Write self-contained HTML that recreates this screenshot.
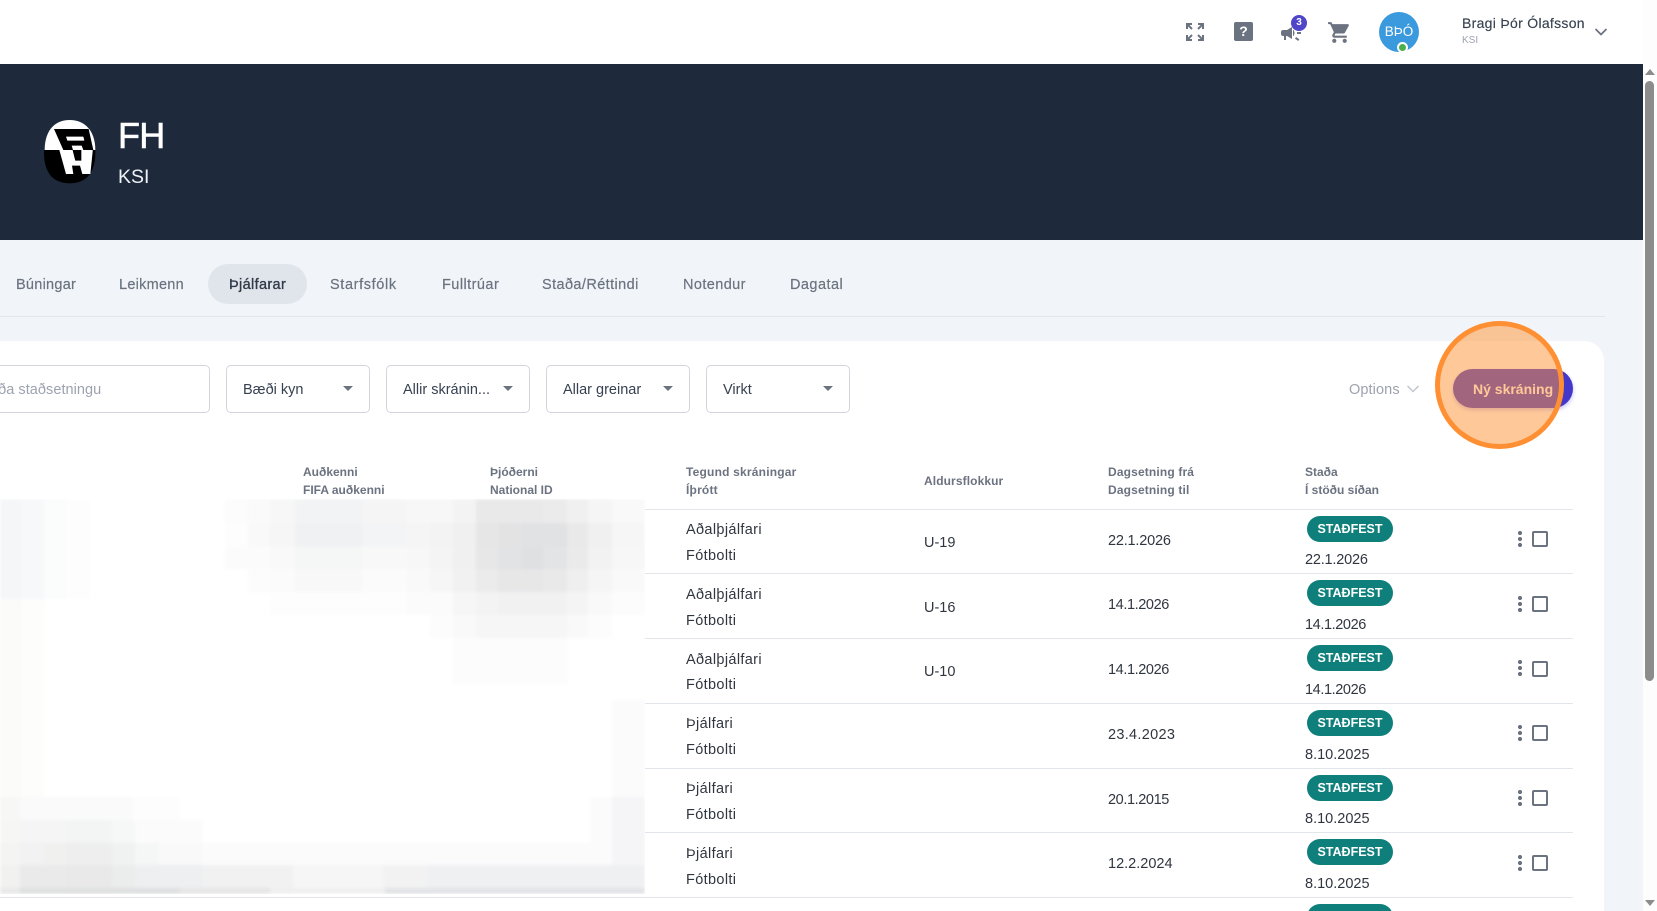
<!DOCTYPE html>
<html lang="is"><head><meta charset="utf-8"><title>FH</title>
<style>
*{box-sizing:border-box;margin:0;padding:0}
html,body{width:1657px;height:911px;overflow:hidden;background:#fff}
body{position:relative;font-family:"Liberation Sans",sans-serif;color:#2f3744}
.a{position:absolute;white-space:nowrap}
.tab{position:absolute;top:276px;font-size:14.5px;line-height:18px;color:#6b7380;white-space:nowrap;-webkit-text-stroke:.2px #6b7380}
.sel{position:absolute;top:365px;width:144px;height:48px;border:1px solid #d2d6dc;border-radius:5px;background:#fff;font-size:14.5px;line-height:48px;padding-left:16px;color:#374151}
.sel i{position:absolute;right:16px;top:20px;width:0;height:0;border-left:5px solid transparent;border-right:5px solid transparent;border-top:5px solid #6b7280}
.th{position:absolute;font-size:12px;line-height:18px;font-weight:bold;color:#6b7280;white-space:nowrap}
.td{position:absolute;font-size:14.5px;line-height:20px;color:#30363f;white-space:nowrap}
.n{letter-spacing:.35px}
.d1{letter-spacing:-.2px}.d2{letter-spacing:-.4px}.d3{letter-spacing:.3px}
.ln{position:absolute;left:0;width:1573px;height:1px;background:#e2e6eb}
.pill{position:absolute;left:1307px;width:86px;height:26px;border-radius:13px;background:#0f7f7c;color:#fff;font-size:12.5px;font-weight:bold;line-height:26px;text-align:center}
.dots{position:absolute;left:1518px;width:4px;height:16px;background:radial-gradient(circle at 2px 2px,#6b7280 2px,transparent 2.2px) 0 0/4px 6px}
.cb{position:absolute;left:1532px;width:16px;height:16px;border:2px solid #6b7280;border-radius:2px;background:#fff}
</style></head><body>

<!-- top bar -->
<div class="a" style="left:0;top:0;width:1643px;height:64px;background:#fff"></div>
<svg class="a" style="left:1186px;top:23px" width="18" height="18" viewBox="0 0 18 18" fill="none" stroke="#6b7280" stroke-width="2"><path d="M1 6V1h5M1 1l5 5M12 1h5v5M17 1l-5 5M1 12v5h5M1 17l5-5M17 12v5h-5M17 17l-5-5"/></svg>
<div class="a" style="left:1234px;top:22px;width:19px;height:19px;background:#6b7280;border-radius:2px;color:#fff;font-size:14px;font-weight:bold;line-height:19px;text-align:center">?</div>
<svg class="a" style="left:1279px;top:21px" width="24" height="24" viewBox="0 0 24 24" fill="#6b7280"><path d="M18 11v2h4v-2h-4zm-2 6.61c.96.71 2.21 1.65 3.2 2.39.4-.53.8-1.07 1.2-1.6-.99-.74-2.24-1.68-3.2-2.4-.4.54-.8 1.08-1.2 1.61zM20.4 5.6c-.4-.53-.8-1.07-1.2-1.6-.99.74-2.24 1.68-3.2 2.4.4.53.8 1.07 1.2 1.6.96-.72 2.21-1.65 3.2-2.4zM4 9c-1.1 0-2 .9-2 2v2c0 1.1.9 2 2 2h1v4h2v-4h1l5 3V6L8 9H4zm11.5 3c0-1.33-.58-2.53-1.5-3.35v6.69c.92-.81 1.5-2.01 1.5-3.34z"/></svg>
<div class="a" style="left:1291px;top:15px;width:16px;height:16px;border-radius:50%;background:#4f46c8;color:#fff;font-size:10px;font-weight:bold;line-height:16px;text-align:center">3</div>
<svg class="a" style="left:1327px;top:20px" width="25" height="25" viewBox="0 0 24 24" fill="#6b7280"><path d="M7 18c-1.1 0-1.99.9-1.99 2S5.9 22 7 22s2-.9 2-2-.9-2-2-2zM1 2v2h2l3.6 7.59-1.35 2.45c-.16.28-.25.61-.25.96 0 1.1.9 2 2 2h12v-2H7.42c-.14 0-.25-.11-.25-.25l.03-.12.9-1.63h7.45c.75 0 1.41-.41 1.75-1.03l3.58-6.49c.08-.14.12-.31.12-.48 0-.55-.45-1-1-1H5.21l-.94-2H1z"/><path d="M17 18c-1.1 0-1.99.9-1.99 2s.89 2 1.99 2 2-.9 2-2-.9-2-2-2z"/></svg>
<div class="a" style="left:1379px;top:12px;width:40px;height:40px;border-radius:50%;background:#3b9ade;color:#fff;font-size:13.5px;line-height:40px;text-align:center">BÞÓ</div>
<div class="a" style="left:1397px;top:42px;width:11px;height:11px;border-radius:50%;background:#4caf50;border:2px solid #fff"></div>
<div class="a" style="left:1462px;top:14px;font-size:14px;line-height:18px;letter-spacing:.3px;color:#374151;-webkit-text-stroke:.15px #374151">Bragi Þór Ólafsson</div>
<div class="a" style="left:1462px;top:34px;font-size:10px;line-height:13px;color:#9ca3af">KSI</div>
<svg class="a" style="left:1594px;top:27px" width="14" height="10" viewBox="0 0 14 10" fill="none" stroke="#6b7280" stroke-width="1.7"><path d="M1.5 2l5.5 5.5L12.5 2"/></svg>

<!-- navy banner -->
<div class="a" style="left:0;top:64px;width:1643px;height:176px;background:#1e2a3c"></div>
<svg class="a" style="left:38px;top:114px" width="64" height="74" viewBox="0 0 192 222">
<path d="M20 108C20 50 50 18 95 18C140 18 172 50 172 108Z" fill="#fff"/>
<path d="M18 108H172C174 170 150 208 95 208C40 208 16 170 18 108Z" fill="#000"/>
<path d="M48 45H152L166 108H136L131 95H101L105 108H76Z" fill="#000"/>
<path d="M84 68H136L139 80H88Z" fill="#fff"/>
<path d="M64 108H104L112 140L122 108H164V112L157 180H133L126 155H102L106 180H84Z" fill="#fff"/>
<path d="M104 108H130L130 140H112Z" fill="#000"/>
</svg>
<div class="a" style="left:118px;top:115px;font-size:36px;line-height:42px;letter-spacing:-.8px;color:#fff;-webkit-text-stroke:.6px #fff">FH</div>
<div class="a" style="left:118px;top:165px;font-size:19.5px;line-height:24px;color:#eef2f7">KSI</div>

<!-- page bg -->
<div class="a" style="left:0;top:240px;width:1643px;height:671px;background:#f1f5f9"></div>
<div class="a" style="left:208px;top:264px;width:99px;height:40px;border-radius:20px;background:#e0e5eb"></div>
<span class="tab" style="left:16px;letter-spacing:.26px">Búningar</span>
<span class="tab" style="left:119px;letter-spacing:.26px">Leikmenn</span>
<span class="tab" style="left:229px;letter-spacing:.35px;color:#323b49;-webkit-text-stroke:.35px #323b49">Þjálfarar</span>
<span class="tab" style="left:330px;letter-spacing:.63px">Starfsfólk</span>
<span class="tab" style="left:442px;letter-spacing:.45px">Fulltrúar</span>
<span class="tab" style="left:542px;letter-spacing:.4px">Staða/Réttindi</span>
<span class="tab" style="left:683px;letter-spacing:.4px">Notendur</span>
<span class="tab" style="left:790px;letter-spacing:.45px">Dagatal</span>
<div class="a" style="left:0;top:316px;width:1605px;height:1px;background:#e2e7ed"></div>

<!-- card -->
<div class="a" style="left:-30px;top:341px;width:1634px;height:600px;background:#fff;border-radius:20px"></div>
<div class="a" style="left:-20px;top:365px;width:230px;height:48px;border:1px solid #d2d6dc;border-radius:5px;background:#fff;font-size:14.5px;line-height:48px;padding-left:9px;letter-spacing:.05px;color:#9ca3af;overflow:hidden">eða staðsetningu</div>
<div class="sel" style="left:226px">Bæði kyn<i></i></div>
<div class="sel" style="left:386px">Allir skránin...<i></i></div>
<div class="sel" style="left:546px">Allar greinar<i></i></div>
<div class="sel" style="left:706px">Virkt<i></i></div>
<div class="a" style="left:1349px;top:381px;font-size:14.5px;line-height:18px;letter-spacing:.1px;color:#9ca3af">Options</div>
<svg class="a" style="left:1406px;top:384px" width="14" height="10" viewBox="0 0 14 10" fill="none" stroke="#c2c7cf" stroke-width="1.5"><path d="M1.5 2l5.5 5.5L12.5 2"/></svg>
<div class="a" style="left:1453px;top:369px;width:120px;height:39px;border-radius:20px;background:#4338ca;box-shadow:0 2px 4px rgba(67,56,202,.3);color:#fff;font-size:14px;font-weight:bold;line-height:41px;padding-left:20px">Ný skráning</div>

<!-- table head -->
<div class="th" style="left:303px;top:463px">Auðkenni<br>FIFA auðkenni</div>
<div class="th" style="left:490px;top:463px">Þjóðerni<br>National ID</div>
<div class="th" style="left:686px;top:463px;letter-spacing:.2px">Tegund skráningar<br>Íþrótt</div>
<div class="th" style="left:924px;top:472px;letter-spacing:.1px">Aldursflokkur</div>
<div class="th" style="left:1108px;top:463px;letter-spacing:.15px">Dagsetning frá<br>Dagsetning til</div>
<div class="th" style="left:1305px;top:463px">Staða<br>Í stöðu síðan</div>

<!-- rows -->
<div class="ln" style="top:509px"></div>
<div class="td n" style="left:686px;top:520px">Aðalþjálfari</div><div class="td n" style="left:686px;top:546px">Fótbolti</div><div class="td" style="left:924px;top:533px">U-19</div><div class="td d1" style="left:1108px;top:531px">22.1.2026</div>
<div class="pill" style="top:516px">STAÐFEST</div><div class="td d1" style="left:1305px;top:550px">22.1.2026</div><div class="dots" style="top:531px"></div><div class="cb" style="top:531px"></div>

<div class="ln" style="top:573px"></div>
<div class="td n" style="left:686px;top:585px">Aðalþjálfari</div><div class="td n" style="left:686px;top:611px">Fótbolti</div><div class="td" style="left:924px;top:598px">U-16</div><div class="td d2" style="left:1108px;top:595px">14.1.2026</div>
<div class="pill" style="top:580px">STAÐFEST</div><div class="td d2" style="left:1305px;top:615px">14.1.2026</div><div class="dots" style="top:596px"></div><div class="cb" style="top:596px"></div>

<div class="ln" style="top:638px"></div>
<div class="td n" style="left:686px;top:650px">Aðalþjálfari</div><div class="td n" style="left:686px;top:675px">Fótbolti</div><div class="td" style="left:924px;top:662px">U-10</div><div class="td d2" style="left:1108px;top:660px">14.1.2026</div>
<div class="pill" style="top:645px">STAÐFEST</div><div class="td d2" style="left:1305px;top:680px">14.1.2026</div><div class="dots" style="top:660px"></div><div class="cb" style="top:661px"></div>

<div class="ln" style="top:703px"></div>
<div class="td n" style="left:686px;top:714px">Þjálfari</div><div class="td n" style="left:686px;top:740px">Fótbolti</div><div class="td d3" style="left:1108px;top:725px">23.4.2023</div>
<div class="pill" style="top:710px">STAÐFEST</div><div class="td" style="left:1305px;top:745px">8.10.2025</div><div class="dots" style="top:725px"></div><div class="cb" style="top:725px"></div>

<div class="ln" style="top:768px"></div>
<div class="td n" style="left:686px;top:779px">Þjálfari</div><div class="td n" style="left:686px;top:805px">Fótbolti</div><div class="td d2" style="left:1108px;top:790px">20.1.2015</div>
<div class="pill" style="top:775px">STAÐFEST</div><div class="td" style="left:1305px;top:809px">8.10.2025</div><div class="dots" style="top:790px"></div><div class="cb" style="top:790px"></div>

<div class="ln" style="top:832px"></div>
<div class="td n" style="left:686px;top:844px">Þjálfari</div><div class="td n" style="left:686px;top:870px">Fótbolti</div><div class="td" style="left:1108px;top:854px">12.2.2024</div>
<div class="pill" style="top:839px">STAÐFEST</div><div class="td" style="left:1305px;top:874px">8.10.2025</div><div class="dots" style="top:855px"></div><div class="cb" style="top:855px"></div>

<div class="ln" style="top:897px"></div>
<div class="pill" style="top:904px">STAÐFEST</div>

<!-- blurred region -->
<div class="a" style="left:0;top:499px;width:645px;height:395px;overflow:hidden;background:#fff">
<svg class="a" style="left:0;top:0;filter:blur(1.5px)" width="645" height="395" viewBox="0 499 645 395" shape-rendering="crispEdges">
<rect x="-10" y="489" width="665" height="415" fill="#fff"/>
<rect x="-10" y="489" width="32" height="110" fill="#f5f6f8"/><rect x="22" y="489" width="22" height="110" fill="#f7f8fa"/><rect x="44" y="489" width="22" height="110" fill="#fbfcfc"/><rect x="66" y="489" width="24" height="110" fill="#fdfdfd"/>
<rect x="-10" y="599" width="32" height="198" fill="#fbfbfa"/><rect x="22" y="599" width="22" height="198" fill="#fdfdfc"/><rect x="612" y="700" width="43" height="97" fill="#fbfbfb"/>
<g>
<rect x="225" y="489" width="23" height="34" fill="#fcfcfc"/><rect x="248" y="489" width="22" height="34" fill="#fafafa"/><rect x="270" y="489" width="25" height="34" fill="#f7f7f7"/><rect x="295" y="489" width="67" height="34" fill="#f2f3f4"/><rect x="362" y="489" width="45" height="34" fill="#f5f5f6"/><rect x="407" y="489" width="46" height="34" fill="#f7f7f7"/><rect x="453" y="489" width="23" height="34" fill="#f3f3f3"/><rect x="476" y="489" width="67" height="34" fill="#e9e9ea"/><rect x="543" y="489" width="24" height="34" fill="#ebebec"/><rect x="567" y="489" width="21" height="34" fill="#f0f0f0"/><rect x="588" y="489" width="24" height="34" fill="#f5f5f5"/><rect x="612" y="489" width="43" height="34" fill="#f9f9f9"/>
<rect x="225" y="523" width="23" height="24" fill="#fdfdfd"/><rect x="248" y="523" width="22" height="24" fill="#f9f9f9"/><rect x="270" y="523" width="25" height="24" fill="#f6f6f6"/><rect x="295" y="523" width="67" height="24" fill="#f0f1f2"/><rect x="362" y="523" width="45" height="24" fill="#f3f4f5"/><rect x="407" y="523" width="23" height="24" fill="#f5f5f5"/><rect x="430" y="523" width="23" height="24" fill="#f3f3f3"/><rect x="453" y="523" width="23" height="24" fill="#f0f0f0"/><rect x="476" y="523" width="22" height="24" fill="#e6e6e7"/><rect x="498" y="523" width="24" height="24" fill="#e3e3e4"/><rect x="522" y="523" width="45" height="24" fill="#e1e2e3"/><rect x="567" y="523" width="21" height="24" fill="#e9e9ea"/><rect x="588" y="523" width="24" height="24" fill="#f0f0f0"/><rect x="612" y="523" width="43" height="24" fill="#f6f6f6"/>
<rect x="225" y="547" width="45" height="22" fill="#fbfbfb"/><rect x="270" y="547" width="25" height="22" fill="#f9f9f9"/><rect x="295" y="547" width="67" height="22" fill="#f5f6f6"/><rect x="362" y="547" width="45" height="22" fill="#f8f8f8"/><rect x="407" y="547" width="23" height="22" fill="#f7f7f7"/><rect x="430" y="547" width="23" height="22" fill="#f4f4f4"/><rect x="453" y="547" width="23" height="22" fill="#f0f0f0"/><rect x="476" y="547" width="22" height="22" fill="#e7e7e8"/><rect x="498" y="547" width="24" height="22" fill="#e2e3e4"/><rect x="522" y="547" width="21" height="22" fill="#dfe0e1"/><rect x="543" y="547" width="24" height="22" fill="#e3e4e5"/><rect x="567" y="547" width="21" height="22" fill="#eaeaeb"/><rect x="588" y="547" width="24" height="22" fill="#f2f2f2"/><rect x="612" y="547" width="43" height="22" fill="#f7f7f7"/>
<rect x="248" y="569" width="22" height="23" fill="#fcfcfc"/><rect x="270" y="569" width="25" height="23" fill="#fbfbfb"/><rect x="295" y="569" width="67" height="23" fill="#f8f8f8"/><rect x="362" y="569" width="45" height="23" fill="#fbfbfb"/><rect x="407" y="569" width="23" height="23" fill="#f9f9f9"/><rect x="430" y="569" width="23" height="23" fill="#f6f6f6"/><rect x="453" y="569" width="23" height="23" fill="#f1f1f1"/><rect x="476" y="569" width="22" height="23" fill="#ebebeb"/><rect x="498" y="569" width="45" height="23" fill="#e7e7e8"/><rect x="543" y="569" width="24" height="23" fill="#e9e9ea"/><rect x="567" y="569" width="21" height="23" fill="#efefef"/><rect x="588" y="569" width="24" height="23" fill="#f5f5f5"/><rect x="612" y="569" width="43" height="23" fill="#f9f9f9"/>
<rect x="270" y="592" width="137" height="23" fill="#fdfdfd"/><rect x="407" y="592" width="46" height="23" fill="#fbfbfb"/><rect x="453" y="592" width="23" height="23" fill="#f6f6f6"/><rect x="476" y="592" width="22" height="23" fill="#f3f3f3"/><rect x="498" y="592" width="69" height="23" fill="#f1f1f1"/><rect x="567" y="592" width="21" height="23" fill="#f4f4f4"/><rect x="588" y="592" width="24" height="23" fill="#f9f9f9"/><rect x="612" y="592" width="43" height="23" fill="#fcfcfc"/>
<rect x="430" y="615" width="23" height="23" fill="#fcfcfc"/><rect x="453" y="615" width="23" height="23" fill="#f9f9f9"/><rect x="476" y="615" width="91" height="23" fill="#f6f6f6"/><rect x="567" y="615" width="21" height="23" fill="#f9f9f9"/><rect x="588" y="615" width="24" height="23" fill="#fcfcfc"/>
<rect x="453" y="638" width="115" height="46" fill="#fcfcfc"/>
</g>
<g>
<rect x="612" y="797" width="43" height="68" fill="#f5f5f7"/><rect x="590" y="797" width="22" height="68" fill="#fbfbfb"/>
<rect x="-10" y="797" width="30" height="23" fill="#f7f7f6"/><rect x="20" y="797" width="112" height="23" fill="#fafafa"/><rect x="132" y="797" width="48" height="23" fill="#fdfdfd"/>
<rect x="-10" y="820" width="30" height="23" fill="#f6f6f5"/><rect x="20" y="820" width="46" height="23" fill="#f5f5f5"/><rect x="66" y="820" width="46" height="23" fill="#f3f4f4"/><rect x="112" y="820" width="23" height="23" fill="#f6f7f7"/><rect x="135" y="820" width="68" height="23" fill="#fbfbfb"/>
<rect x="-10" y="843" width="30" height="22" fill="#f4f4f3"/><rect x="20" y="843" width="24" height="22" fill="#f2f2f2"/><rect x="44" y="843" width="22" height="22" fill="#f0f0ef"/><rect x="66" y="843" width="46" height="22" fill="#edeeed"/><rect x="112" y="843" width="23" height="22" fill="#f0f1f1"/><rect x="135" y="843" width="23" height="22" fill="#f5f6f6"/><rect x="158" y="843" width="45" height="22" fill="#f9f9f9"/><rect x="203" y="843" width="387" height="22" fill="#fbfbfc"/>
<rect x="-10" y="865" width="30" height="23" fill="#f1f1f0"/><rect x="20" y="865" width="46" height="23" fill="#eaeaea"/><rect x="66" y="865" width="46" height="23" fill="#e8e9e8"/><rect x="112" y="865" width="23" height="23" fill="#ebecec"/><rect x="135" y="865" width="68" height="23" fill="#eeeff1"/><rect x="203" y="865" width="90" height="23" fill="#f1f1f2"/><rect x="293" y="865" width="90" height="23" fill="#f6f6f6"/><rect x="383" y="865" width="45" height="23" fill="#f2f2f3"/><rect x="428" y="865" width="227" height="23" fill="#eff0f2"/>
<rect x="-10" y="888" width="30" height="16" fill="#e8e8e8"/><rect x="20" y="888" width="160" height="16" fill="#dfe0e1"/><rect x="180" y="888" width="90" height="16" fill="#e6e6e7"/><rect x="270" y="888" width="115" height="16" fill="#f0f0f0"/><rect x="385" y="888" width="270" height="16" fill="#e2e3e6"/>
</g>
</svg>
</div>

<!-- orange highlight -->
<div class="a" style="left:1435px;top:321px;width:129px;height:128px;border-radius:50%;background:rgba(255,145,50,.5);border:5px solid #ff8f33"></div>

<!-- scrollbar -->
<div class="a" style="left:1643px;top:0;width:14px;height:911px;background:#fdfdfd"></div>
<div class="a" style="left:1645px;top:81px;width:9px;height:600px;border-radius:5px;background:#8c8c8c"></div>
<div class="a" style="left:1645px;top:69px;width:0;height:0;border-left:5px solid transparent;border-right:5px solid transparent;border-bottom:6px solid #8c8c8c"></div>
<div class="a" style="left:1645px;top:900px;width:0;height:0;border-left:5px solid transparent;border-right:5px solid transparent;border-top:6px solid #8c8c8c"></div>
</body></html>
